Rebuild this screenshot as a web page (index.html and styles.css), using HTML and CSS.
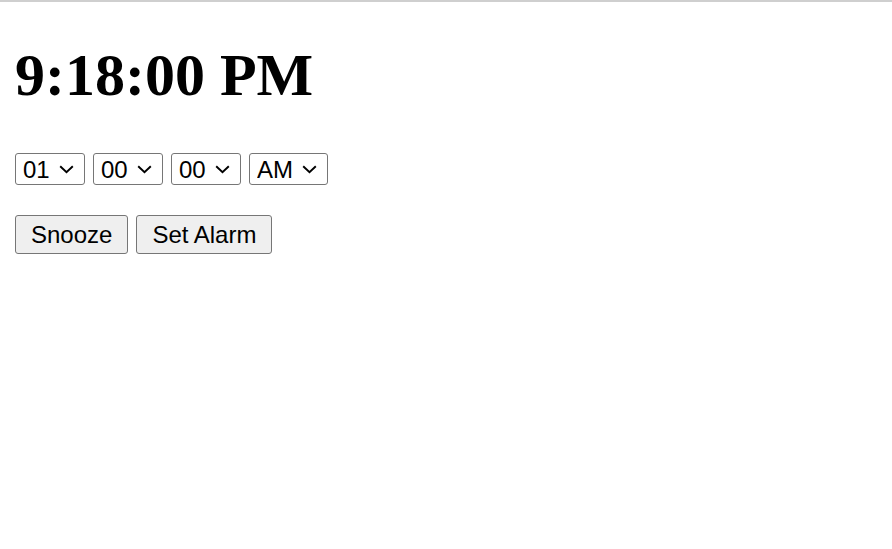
FILE: index.html
```html
<!DOCTYPE html>
<html>
<head>
<meta charset="utf-8">
<link rel="stylesheet" href="styles.css">
</head>
<body>
<div class="page">
  <h1 class="clock">9:18:00 PM</h1>
  <div class="row selects">
    <select class="sel"><option>01</option></select>
    <select class="sel"><option>00</option></select>
    <select class="sel"><option>00</option></select>
    <select class="sel"><option>AM</option></select>
  </div>
  <div class="row buttons">
    <button class="btn">Snooze</button>
    <button class="btn">Set Alarm</button>
  </div>
</div>
</body>
</html>
```
FILE: styles.css
```css
html, body {
  margin: 0;
  padding: 0;
  background: #fff;
}
body {
  border-top: 2px solid #cfcfcf;
}
.page {
  padding: 0 15px;
}
.clock {
  font-family: "Liberation Serif", "Times New Roman", serif;
  font-weight: bold;
  font-size: 60px;
  line-height: 69px;
  margin: 0;
  padding-top: 39px;
  color: #000;
}
.row {
  display: flex;
  gap: 8px;
}
.selects {
  margin-top: 43px;
}
.sel {
  -webkit-appearance: none;
  appearance: none;
  font-family: "Liberation Sans", Arial, sans-serif;
  font-size: 24px;
  height: 32px;
  border: 1px solid #767676;
  border-radius: 3px;
  background-color: #fff;
  background-image: url("data:image/svg+xml,%3Csvg xmlns='http://www.w3.org/2000/svg' width='15' height='9' viewBox='0 0 15 9'%3E%3Cpath d='M1.2 1.2 L7.5 7.3 L13.8 1.2' fill='none' stroke='%23000' stroke-width='1.9'/%3E%3C/svg%3E");
  background-repeat: no-repeat;
  background-position: right 10px center;
  background-size: 15px 9px;
  color: #000;
  padding: 0 34px 0 7px;
  margin: 0;
}
.buttons {
  margin-top: 30px;
}
.btn {
  font-family: "Liberation Sans", Arial, sans-serif;
  font-size: 24px;
  height: 39px;
  padding: 0 15px;
  margin: 0;
  border: 1px solid #767676;
  border-radius: 3px;
  background: #efefef;
  color: #000;
}
```
